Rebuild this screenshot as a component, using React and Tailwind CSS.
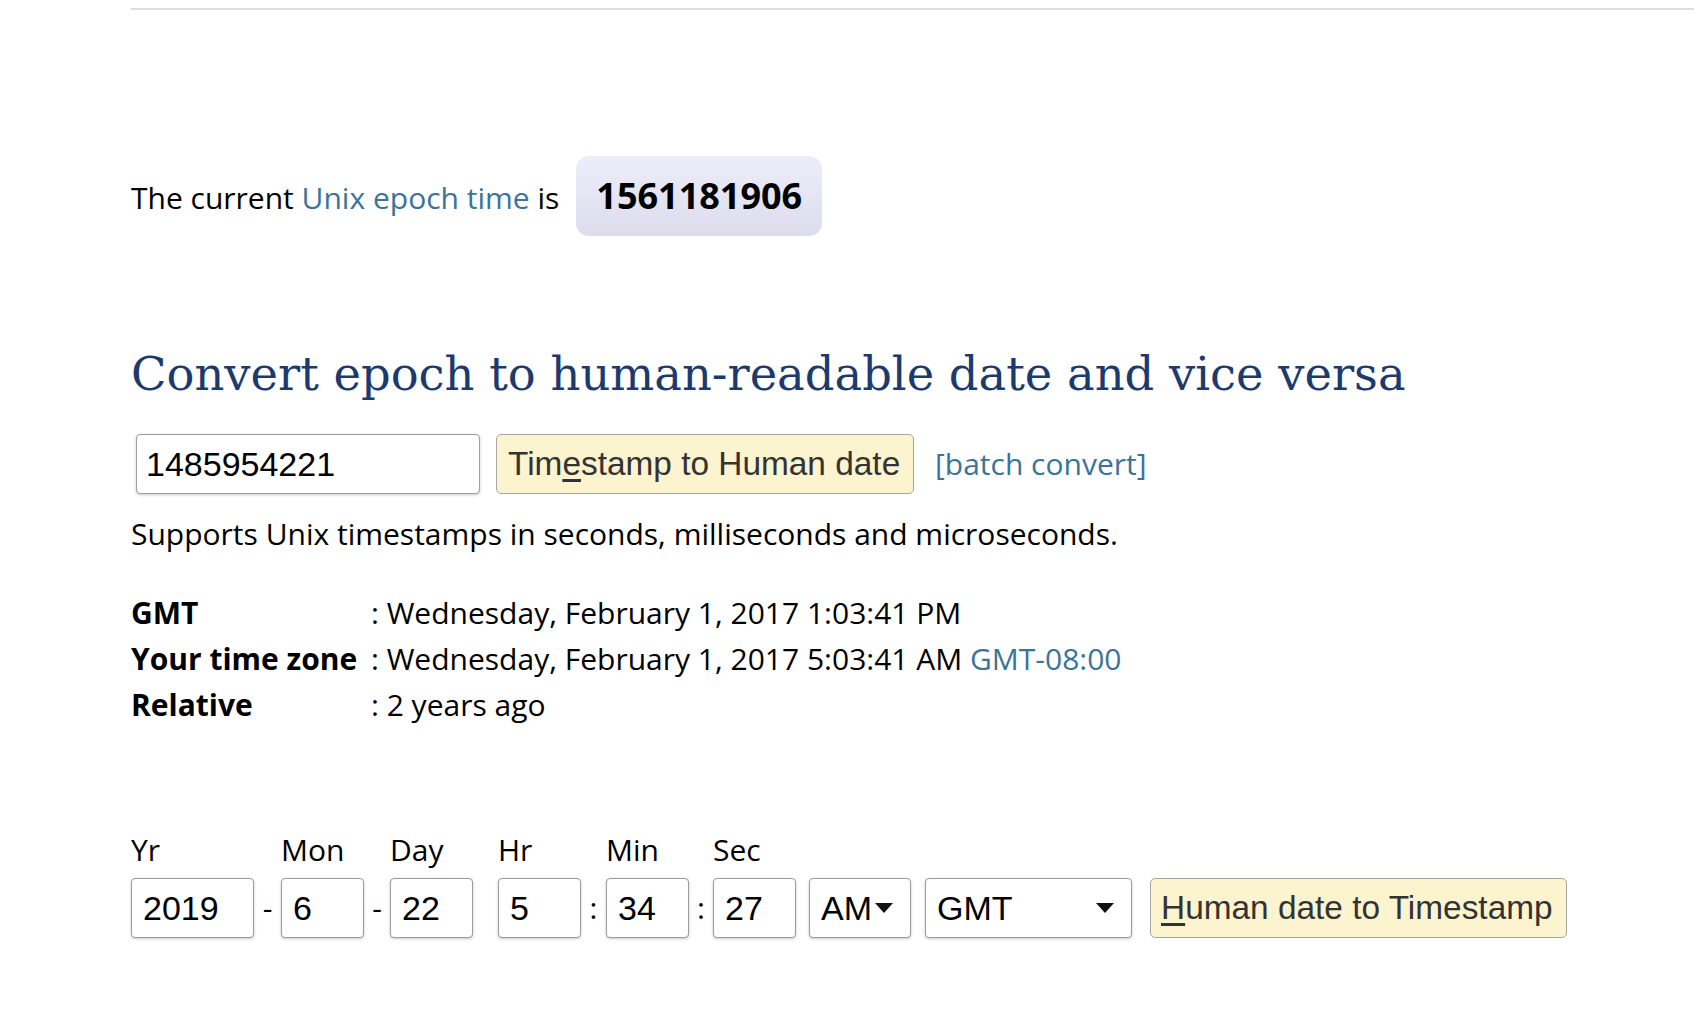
import React from 'react';

const fields = [
  { label: 'Yr', value: '2019', w: 'w-[123px]', sep: '-', gap: 'w-[27px]' },
  { label: 'Mon', value: '6', w: 'w-[83px]', sep: '-', gap: 'w-[26px]' },
  { label: 'Day', value: '22', w: 'w-[83px]', sep: null, gap: 'w-[25px]' },
  { label: 'Hr', value: '5', w: 'w-[83px]', sep: ':', gap: 'w-[25px]' },
  { label: 'Min', value: '34', w: 'w-[83px]', sep: ':', gap: 'w-[24px]' },
  { label: 'Sec', value: '27', w: 'w-[83px]', sep: null, gap: 'w-[13px]' },
];

function Caret() {
  return (
    <svg width="18" height="10" viewBox="0 0 18 10" className="shrink-0">
      <polygon points="0,0 18,0 9,10" fill="#111" />
    </svg>
  );
}

export default function App() {
  const box = "h-[60px] border border-[#9c9c9c] rounded-[4px] bg-white shadow-[0_1px_3px_rgba(0,0,0,0.22)] font-['Liberation_Sans',Arial,sans-serif] text-[34px] text-black flex items-center";
  const btn = "h-[60px] border border-[#a6a6a6] rounded-[5px] bg-[#fcf3cf] font-['Liberation_Sans',Arial,sans-serif] text-[33.4px] text-[#333] text-left whitespace-nowrap overflow-hidden";

  return (
    <div className="min-h-screen bg-white pl-[131px] pt-[8px] font-['Open_Sans',sans-serif] text-[30px] leading-[40px] text-black">
      <div className="h-[2px] bg-[#dcdcdc]" />

      {/* current epoch */}
      <div className="mt-[146px] flex items-baseline">
        <span>The current <a className="text-[#3a7498]">Unix epoch time</a> is</span>
        <div className="ml-[17px] h-[80px] px-[20px] rounded-[13px] bg-gradient-to-b from-[#ededfa] to-[#dcdcec] text-[36px] font-bold leading-[80px]">
          1561181906
        </div>
      </div>

      <h1 className="mt-[108px] font-['DejaVu_Serif',serif] text-[46.4px] leading-[60px] text-[#1d3a6f]">
        Convert epoch to human-readable date and vice versa
      </h1>

      {/* timestamp -> date */}
      <div className="mt-[30px] flex items-center">
        <div className={`${box} ml-[5px] w-[344px] pl-[9px]`}>1485954221</div>
        <button className={`${btn} ml-[16px] w-[418px] px-[11px]`}>
          Tim<span className="underline underline-offset-[4px]">e</span>stamp to Human date
        </button>
        <a className="ml-[21px] text-[#3a7498]">[batch convert]</a>
      </div>

      <p className="mt-[20px]">Supports Unix timestamps in seconds, milliseconds and microseconds.</p>

      <div className="mt-[36px] leading-[46px]">
        <div className="flex">
          <b className="w-[240px]">GMT</b>
          <span>: Wednesday, February 1, 2017 1:03:41 PM</span>
        </div>
        <div className="flex">
          <b className="w-[240px]">Your time zone</b>
          <span>: Wednesday, February 1, 2017 5:03:41 AM <a className="text-[#3a7498]">GMT-08:00</a></span>
        </div>
        <div className="flex">
          <b className="w-[240px]">Relative</b>
          <span>: 2 years ago</span>
        </div>
      </div>

      {/* date -> timestamp */}
      <div className="mt-[102px] flex items-end">
        {fields.map((f) => (
          <React.Fragment key={f.label}>
            <div className="flex flex-col">
              <span className="mb-[8px]">{f.label}</span>
              <div className={`${box} ${f.w} px-[11px]`}>{f.value}</div>
            </div>
            <div className={`h-[60px] ${f.gap} flex items-center justify-center`}>{f.sep}</div>
          </React.Fragment>
        ))}
        <div className={`${box} w-[102px] pl-[11px] gap-[3px]`}>
          AM
          <Caret />
        </div>
        <div className={`${box} ml-[14px] w-[207px] pl-[11px] pr-[17px] justify-between`}>
          GMT
          <Caret />
        </div>
        <button className={`${btn} ml-[18px] w-[417px] px-[10px]`}>
          <span className="underline underline-offset-[4px]">H</span>uman date to Timestamp
        </button>
      </div>
    </div>
  );
}
